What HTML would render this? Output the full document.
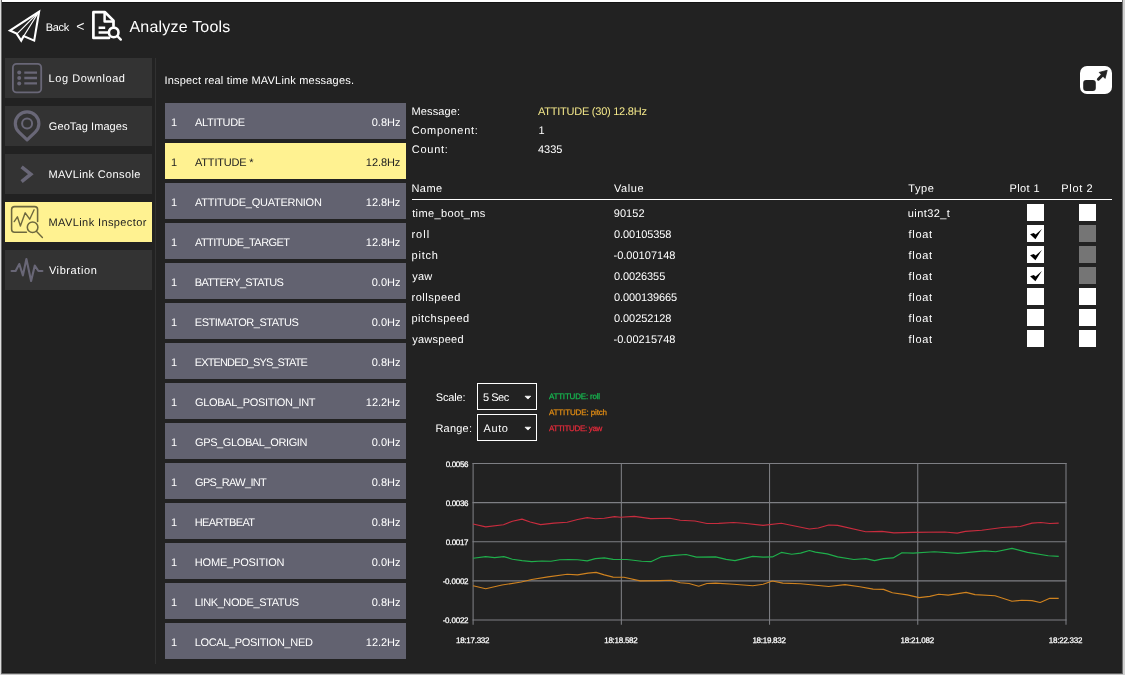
<!DOCTYPE html>
<html lang="en"><head><meta charset="utf-8"><title>Analyze Tools - MAVLink Inspector</title>
<style>
html,body{margin:0;padding:0;}
body{width:1125px;height:675px;overflow:hidden;background:#222;position:relative;font-family:"Liberation Sans",sans-serif;color:#fff;}
.frame{position:absolute;left:0;top:0;width:1125px;height:675px;box-sizing:border-box;pointer-events:none;}
.b{position:absolute;}
.t{position:absolute;white-space:pre;line-height:normal;text-rendering:geometricPrecision;}
.sb{position:absolute;left:5px;width:147px;height:40px;background:#333;}
.sb.sel{background:#fff291;}
.li{position:absolute;left:165px;width:241px;height:36px;background:#626270;}
.li.sel{background:#fff291;}
.cb{position:absolute;width:17px;height:17px;background:#fff;}
.cb.dis{background:#757575;}
.combo{position:absolute;left:477px;width:60px;height:27px;box-sizing:border-box;border:1px solid #fff;}
svg.ov{position:absolute;left:0;top:0;}
.tl{position:absolute;left:0;top:0;width:1125px;height:675px;will-change:transform;}

</style></head>
<body>
<div class="b" style="left:0;top:0;width:1125px;height:2px;background:#fff"></div>
<div class="b" style="left:0;top:2px;width:1125px;height:1px;background:#141414"></div>
<div class="b" style="left:0;top:672px;width:1125px;height:1px;background:#1c1c1c"></div>
<div class="b" style="left:0;top:673px;width:1125px;height:1px;background:#5e5e5e"></div>
<div class="b" style="left:0;top:674px;width:1125px;height:1px;background:#c6c6c6"></div>
<div class="b" style="left:0;top:0;width:1px;height:675px;background:#dedede"></div>
<div class="b" style="left:1px;top:0;width:1px;height:674px;background:#6a6a6a"></div>
<div class="b" style="left:2px;top:3px;width:1px;height:670px;background:#1d1d1d"></div>
<div class="b" style="left:1121px;top:3px;width:1px;height:670px;background:#272727"></div>
<div class="b" style="left:1122px;top:0;width:1px;height:674px;background:#6e6e6e"></div>
<div class="b" style="left:1123px;top:0;width:2px;height:675px;background:#d0d0d0"></div>
<div class="sb" style="top:58px"></div>
<div class="sb" style="top:106px"></div>
<div class="sb" style="top:154px"></div>
<div class="sb sel" style="top:202px"></div>
<div class="sb" style="top:250px"></div>
<div class="b" style="left:155px;top:58px;width:1px;height:606px;background:#313131"></div>
<div class="li" style="top:103px"></div>
<div class="li sel" style="top:143px"></div>
<div class="li" style="top:183px"></div>
<div class="li" style="top:223px"></div>
<div class="li" style="top:263px"></div>
<div class="li" style="top:303px"></div>
<div class="li" style="top:343px"></div>
<div class="li" style="top:383px"></div>
<div class="li" style="top:423px"></div>
<div class="li" style="top:463px"></div>
<div class="li" style="top:503px"></div>
<div class="li" style="top:543px"></div>
<div class="li" style="top:583px"></div>
<div class="li" style="top:623px"></div>
<div class="b" style="left:412px;top:199px;width:700px;height:1px;background:#fff"></div>
<div class="cb" style="left:1027px;top:204px"></div>
<div class="cb" style="left:1079px;top:204px"></div>
<div class="cb" style="left:1027px;top:225px"></div>
<div class="cb dis" style="left:1079px;top:225px"></div>
<div class="cb" style="left:1027px;top:246px"></div>
<div class="cb dis" style="left:1079px;top:246px"></div>
<div class="cb" style="left:1027px;top:267px"></div>
<div class="cb dis" style="left:1079px;top:267px"></div>
<div class="cb" style="left:1027px;top:288px"></div>
<div class="cb" style="left:1079px;top:288px"></div>
<div class="cb" style="left:1027px;top:309px"></div>
<div class="cb" style="left:1079px;top:309px"></div>
<div class="cb" style="left:1027px;top:330px"></div>
<div class="cb" style="left:1079px;top:330px"></div>
<div class="combo" style="top:383px"></div>
<div class="combo" style="top:414px"></div>
<div class="b" style="left:1080px;top:66px;width:32px;height:28px;border-radius:7px;background:#fff"></div>
<svg class="ov" width="1125" height="675" viewBox="0 0 1125 675" fill="none">
<g stroke="#fff" stroke-linejoin="miter" stroke-linecap="round">
<path d="M39.1,11.6 L9.9,30.5 L16.6,33.6 L21.2,40.6 L23.7,36 L34.2,40.6 Z" stroke-width="2.1"/>
<path d="M38.9,11.8 L17.2,33.6 M38.9,11.8 L23.8,36" stroke-width="1.2"/>
</g>
<g stroke="#fff" stroke-width="2.7" stroke-linejoin="round" stroke-linecap="round">
<path d="M109,37.9 L93.4,37.9 L93.4,12.2 L105,12.2 L113.5,20.6 L113.5,26"/>
<path d="M104.6,12.6 L104.6,21.4 L113,21.4" stroke-width="2.5"/>
<path d="M98.6,27.7 L105.2,27.7 M98.6,32.6 L108,32.6" stroke-width="2.5" stroke-linecap="butt"/>
<circle cx="113.7" cy="32.4" r="4.8" stroke-width="2.6" fill="#222"/>
<path d="M117.4,36.2 L120.8,39.6" stroke-width="2.4"/>
</g>
<g stroke="#696777" fill="none">
<rect x="12.9" y="63.8" width="28.3" height="28.5" rx="3.6" stroke-width="1.8"/>
<path d="M24.3,72.6 H37 M24.3,78 H37 M24.3,83.4 H37" stroke-width="2.3"/>
</g>
<g fill="#696777"><circle cx="19.2" cy="72.6" r="2"/><circle cx="19.2" cy="78" r="2"/><circle cx="19.2" cy="83.4" r="2"/></g>
<g stroke="#696777" fill="none">
<path d="M27.1,139.9 L35.24,132.14 A11.8,11.8 0 1 0 18.96,132.14 Z" stroke-width="3.2" stroke-linejoin="round"/>
<circle cx="27.1" cy="123.4" r="5" stroke-width="2"/>
</g>
<path d="M21.6,166.8 L30.8,174.2 L21.6,181.6" stroke="#696777" stroke-width="3.6" stroke-linejoin="miter" fill="none"/>
<g stroke="#6d683f" fill="none" stroke-width="1.55" stroke-linecap="round" stroke-linejoin="round">
<path d="M26.4,232.3 H14.6 A3,3 0 0 1 11.6,229.3 V209.6 A3,3 0 0 1 14.6,206.6 H34.6 A3,3 0 0 1 37.6,209.6 V221.5"/>
<path d="M14.2,221.6 L17.4,216.8 L20.4,226 L25.2,212.8 L29.7,219.2 L34.1,209.8" stroke-width="1.4"/>
<circle cx="32.6" cy="227.2" r="5.3"/>
<path d="M36.6,231.4 L42.4,237.4" stroke-width="1.4"/>
</g>
<path d="M11.6,271 H15.6 L19.3,264 L22.9,275.4 L26.4,259 L31.1,281 L34.8,265.6 L38.4,271 H42.4" stroke="#696777" stroke-width="2.1" stroke-linejoin="round" stroke-linecap="round" fill="none"/>
<rect x="1083.2" y="80" width="12.6" height="11" rx="3" fill="#222"/>
<path d="M1098.4,79.2 L1103.2,74.4" stroke="#222" stroke-width="3" stroke-linecap="round"/>
<path d="M1107.2,70.3 L1099.2,72.4 L1105.1,78.4 Z" fill="#222" stroke="#222" stroke-width="0.8" stroke-linejoin="round"/>
<path d="M1030.1,234.2 L1033.8,233.1 L1035.6,234.5 L1041.9,229.0 L1035.4,239.2 Z" fill="#000"/>
<path d="M1030.1,255.2 L1033.8,254.1 L1035.6,255.5 L1041.9,250.0 L1035.4,260.2 Z" fill="#000"/>
<path d="M1030.1,276.2 L1033.8,275.1 L1035.6,276.5 L1041.9,271.0 L1035.4,281.2 Z" fill="#000"/>
<path d="M525,396.2 H530.8 L527.9,399.1 Z" fill="#fff" stroke="#fff" stroke-width="0.7" stroke-linejoin="round"/>
<path d="M525,427.2 H530.8 L527.9,430.1 Z" fill="#fff" stroke="#fff" stroke-width="0.7" stroke-linejoin="round"/>
<g stroke="#7e7f84" stroke-width="1.05">
<path d="M472.5,463.5 H1066.6"/>
<path d="M472.5,502.6 H1066.6"/>
<path d="M472.5,541.7 H1066.6"/>
<path d="M472.5,580.85 H1066.6"/>
<path d="M472.5,620.0 H1066.6"/>
<path d="M473.1,463 V624.7"/>
<path d="M621.35,463 V624.7"/>
<path d="M769.55,463 V624.7"/>
<path d="M917.75,463 V624.7"/>
<path d="M1066.0,463 V624.7"/>
</g>
<polyline points="473.1,558.3 485.7,556.6 494.6,557.6 503.8,556.6 512.4,559.2 522.0,560.6 531.7,561.6 542.0,561.0 550.9,561.3 559.8,559.8 568.7,559.5 577.6,559.8 587.2,560.9 595.4,558.6 604.3,557.9 613.1,559.4 626.9,559.5 641.7,561.3 651.3,561.6 660.9,556.9 674.3,555.4 686.1,554.5 696.5,557.1 715.7,556.9 726.1,559.4 735.0,560.6 752.8,556.4 763.1,557.1 772.4,556.9 781.3,552.4 791.7,554.2 800.6,553.1 809.4,550.5 815.4,552.1 827.2,553.9 837.6,556.9 853.9,559.5 865.7,558.6 874.6,560.6 883.5,558.6 893.1,557.9 902.0,552.7 913.1,553.1 934.3,551.7 958.0,553.4 984.6,550.9 995.7,551.7 1012.0,548.4 1027.6,552.4 1048.3,555.7 1058.7,556.4" stroke="#1fae4b" stroke-width="1.15" stroke-linejoin="round" fill="none"/>
<polyline points="473.1,585.7 485.7,588.7 502.0,585.0 521.3,582.0 531.7,579.5 548.0,576.9 567.2,574.3 577.6,574.9 588.0,573.1 596.1,572.4 604.3,574.9 613.1,577.1 623.9,577.3 640.2,580.9 659.4,580.6 671.3,580.3 680.2,582.8 689.1,583.5 698.7,586.2 706.9,583.5 715.7,583.1 733.5,584.3 752.8,585.7 763.1,584.3 772.4,581.0 782.8,583.1 800.6,583.8 828.7,586.5 845.0,584.6 859.8,586.8 873.1,589.1 883.5,589.4 892.4,592.7 907.2,594.9 919.1,597.6 929.8,596.4 938.7,594.2 948.3,595.1 966.1,592.4 975.0,594.6 995.0,595.8 1012.0,601.3 1021.7,600.3 1032.0,600.6 1040.2,602.5 1049.8,598.3 1058.7,598.3" stroke="#cf821f" stroke-width="1.15" stroke-linejoin="round" fill="none"/>
<polyline points="473.1,524.0 485.7,526.9 503.5,524.7 512.4,521.3 522.0,519.1 530.2,522.0 540.6,524.6 553.9,523.1 567.2,522.3 577.6,519.5 587.2,517.6 595.4,518.8 604.3,518.3 614.6,516.6 620.6,517.3 634.3,516.4 650.6,518.6 669.8,518.3 680.2,520.3 695.0,521.0 706.9,523.5 718.7,523.4 733.5,522.5 743.9,523.2 763.1,525.4 781.3,523.2 809.4,529.0 818.3,528.0 828.7,525.0 837.6,525.4 865.7,531.7 882.0,531.4 893.9,532.9 913.1,532.4 944.6,532.0 957.2,533.1 965.4,531.4 981.7,530.2 1002.4,527.5 1020.2,526.5 1032.0,523.1 1040.9,522.5 1049.8,523.5 1058.7,523.1" stroke="#c82c3e" stroke-width="1.15" stroke-linejoin="round" fill="none"/>
</svg>
<div class="tl">
<span class="t" style="left:45.85px;top:22.00px;font-size:11px;letter-spacing:-0.350px;">Back</span>
<span class="t" style="left:76.30px;top:18.00px;font-size:14px;">&lt;</span>
<span class="t" style="left:129.40px;top:19.00px;font-size:16px;letter-spacing:0.208px;">Analyze Tools</span>
<span class="t" style="left:48.55px;top:73.00px;font-size:11px;letter-spacing:0.555px;">Log Download</span>
<span class="t" style="left:48.80px;top:121.00px;font-size:11px;letter-spacing:0.087px;">GeoTag Images</span>
<span class="t" style="left:48.55px;top:169.00px;font-size:11px;letter-spacing:0.371px;">MAVLink Console</span>
<span class="t" style="left:48.55px;top:217.00px;font-size:11px;letter-spacing:0.397px;color:#222;">MAVLink Inspector</span>
<span class="t" style="left:48.90px;top:265.00px;font-size:11px;letter-spacing:0.581px;">Vibration</span>
<span class="t" style="left:164.40px;top:75.00px;font-size:11px;letter-spacing:0.187px;">Inspect real time MAVLink messages.</span>
<span class="t" style="left:171.05px;top:117.00px;font-size:11px;">1</span>
<span class="t" style="left:195.00px;top:117.00px;font-size:11px;letter-spacing:-0.314px;">ALTITUDE</span>
<span class="t" style="left:371.75px;top:117.00px;font-size:11px;">0.8Hz</span>
<span class="t" style="left:171.05px;top:157.00px;font-size:11px;color:#222;">1</span>
<span class="t" style="left:195.00px;top:157.00px;font-size:11px;letter-spacing:-0.183px;color:#222;">ATTITUDE *</span>
<span class="t" style="left:365.85px;top:157.00px;font-size:11px;letter-spacing:-0.070px;color:#222;">12.8Hz</span>
<span class="t" style="left:171.05px;top:197.00px;font-size:11px;">1</span>
<span class="t" style="left:195.00px;top:197.00px;font-size:11px;letter-spacing:-0.264px;">ATTITUDE_QUATERNION</span>
<span class="t" style="left:365.85px;top:197.00px;font-size:11px;letter-spacing:-0.070px;">12.8Hz</span>
<span class="t" style="left:171.05px;top:237.00px;font-size:11px;">1</span>
<span class="t" style="left:195.00px;top:237.00px;font-size:11px;letter-spacing:-0.561px;">ATTITUDE_TARGET</span>
<span class="t" style="left:365.85px;top:237.00px;font-size:11px;letter-spacing:-0.070px;">12.8Hz</span>
<span class="t" style="left:171.05px;top:277.00px;font-size:11px;">1</span>
<span class="t" style="left:194.75px;top:277.00px;font-size:11px;letter-spacing:-0.654px;">BATTERY_STATUS</span>
<span class="t" style="left:371.75px;top:277.00px;font-size:11px;">0.0Hz</span>
<span class="t" style="left:171.05px;top:317.00px;font-size:11px;">1</span>
<span class="t" style="left:194.75px;top:317.00px;font-size:11px;letter-spacing:-0.460px;">ESTIMATOR_STATUS</span>
<span class="t" style="left:371.75px;top:317.00px;font-size:11px;">0.0Hz</span>
<span class="t" style="left:171.05px;top:357.00px;font-size:11px;">1</span>
<span class="t" style="left:194.75px;top:357.00px;font-size:11px;letter-spacing:-0.868px;">EXTENDED_SYS_STATE</span>
<span class="t" style="left:371.75px;top:357.00px;font-size:11px;">0.8Hz</span>
<span class="t" style="left:171.05px;top:397.00px;font-size:11px;">1</span>
<span class="t" style="left:195.00px;top:397.00px;font-size:11px;letter-spacing:-0.333px;">GLOBAL_POSITION_INT</span>
<span class="t" style="left:365.85px;top:397.00px;font-size:11px;letter-spacing:-0.070px;">12.2Hz</span>
<span class="t" style="left:171.05px;top:437.00px;font-size:11px;">1</span>
<span class="t" style="left:195.00px;top:437.00px;font-size:11px;letter-spacing:-0.384px;">GPS_GLOBAL_ORIGIN</span>
<span class="t" style="left:371.75px;top:437.00px;font-size:11px;">0.0Hz</span>
<span class="t" style="left:171.05px;top:477.00px;font-size:11px;">1</span>
<span class="t" style="left:195.00px;top:477.00px;font-size:11px;letter-spacing:-0.665px;">GPS_RAW_INT</span>
<span class="t" style="left:371.75px;top:477.00px;font-size:11px;">0.8Hz</span>
<span class="t" style="left:171.05px;top:517.00px;font-size:11px;">1</span>
<span class="t" style="left:194.75px;top:517.00px;font-size:11px;letter-spacing:-0.588px;">HEARTBEAT</span>
<span class="t" style="left:371.75px;top:517.00px;font-size:11px;">0.8Hz</span>
<span class="t" style="left:171.05px;top:557.00px;font-size:11px;">1</span>
<span class="t" style="left:194.75px;top:557.00px;font-size:11px;letter-spacing:-0.163px;">HOME_POSITION</span>
<span class="t" style="left:371.75px;top:557.00px;font-size:11px;">0.0Hz</span>
<span class="t" style="left:171.05px;top:597.00px;font-size:11px;">1</span>
<span class="t" style="left:194.75px;top:597.00px;font-size:11px;letter-spacing:-0.393px;">LINK_NODE_STATUS</span>
<span class="t" style="left:371.75px;top:597.00px;font-size:11px;">0.8Hz</span>
<span class="t" style="left:171.05px;top:637.00px;font-size:11px;">1</span>
<span class="t" style="left:194.75px;top:637.00px;font-size:11px;letter-spacing:-0.353px;">LOCAL_POSITION_NED</span>
<span class="t" style="left:365.85px;top:637.00px;font-size:11px;letter-spacing:-0.070px;">12.2Hz</span>
<span class="t" style="left:411.45px;top:106.00px;font-size:11px;letter-spacing:0.143px;">Message:</span>
<span class="t" style="left:411.70px;top:125.00px;font-size:11px;letter-spacing:0.678px;">Component:</span>
<span class="t" style="left:411.70px;top:144.00px;font-size:11px;letter-spacing:0.760px;">Count:</span>
<span class="t" style="left:538.00px;top:106.00px;font-size:11px;letter-spacing:-0.242px;color:#f3e78a;">ATTITUDE (30) 12.8Hz</span>
<span class="t" style="left:538.45px;top:125.00px;font-size:11px;">1</span>
<span class="t" style="left:537.95px;top:144.00px;font-size:11px;">4335</span>
<span class="t" style="left:411.45px;top:183.00px;font-size:11px;letter-spacing:0.483px;">Name</span>
<span class="t" style="left:614.00px;top:183.00px;font-size:11px;letter-spacing:0.550px;">Value</span>
<span class="t" style="left:908.25px;top:183.00px;font-size:11px;letter-spacing:0.550px;">Type</span>
<span class="t" style="left:1009.45px;top:183.00px;font-size:11px;letter-spacing:0.400px;">Plot 1</span>
<span class="t" style="left:1061.35px;top:183.00px;font-size:11px;letter-spacing:0.640px;">Plot 2</span>
<span class="t" style="left:412.20px;top:208.00px;font-size:11px;letter-spacing:0.368px;">time_boot_ms</span>
<span class="t" style="left:613.80px;top:208.00px;font-size:11px;letter-spacing:0.037px;">90152</span>
<span class="t" style="left:907.75px;top:208.00px;font-size:11px;letter-spacing:0.429px;">uint32_t</span>
<span class="t" style="left:411.45px;top:229.00px;font-size:11px;letter-spacing:1.017px;">roll</span>
<span class="t" style="left:614.05px;top:229.00px;font-size:11px;letter-spacing:-0.078px;">0.00105358</span>
<span class="t" style="left:908.50px;top:229.00px;font-size:11px;letter-spacing:0.713px;">float</span>
<span class="t" style="left:411.45px;top:250.00px;font-size:11px;letter-spacing:0.825px;">pitch</span>
<span class="t" style="left:613.50px;top:250.00px;font-size:11px;letter-spacing:0.010px;">-0.00107148</span>
<span class="t" style="left:908.50px;top:250.00px;font-size:11px;letter-spacing:0.713px;">float</span>
<span class="t" style="left:412.20px;top:271.00px;font-size:11px;letter-spacing:0.275px;">yaw</span>
<span class="t" style="left:614.05px;top:271.00px;font-size:11px;letter-spacing:-0.100px;">0.0026355</span>
<span class="t" style="left:908.50px;top:271.00px;font-size:11px;letter-spacing:0.713px;">float</span>
<span class="t" style="left:411.45px;top:292.00px;font-size:11px;letter-spacing:0.531px;">rollspeed</span>
<span class="t" style="left:614.05px;top:292.00px;font-size:11px;letter-spacing:-0.105px;">0.000139665</span>
<span class="t" style="left:908.50px;top:292.00px;font-size:11px;letter-spacing:0.713px;">float</span>
<span class="t" style="left:411.45px;top:313.00px;font-size:11px;letter-spacing:0.506px;">pitchspeed</span>
<span class="t" style="left:614.05px;top:313.00px;font-size:11px;letter-spacing:-0.078px;">0.00252128</span>
<span class="t" style="left:908.50px;top:313.00px;font-size:11px;letter-spacing:0.713px;">float</span>
<span class="t" style="left:412.20px;top:334.00px;font-size:11px;letter-spacing:0.271px;">yawspeed</span>
<span class="t" style="left:613.50px;top:334.00px;font-size:11px;letter-spacing:0.010px;">-0.00215748</span>
<span class="t" style="left:908.50px;top:334.00px;font-size:11px;letter-spacing:0.713px;">float</span>
<span class="t" style="left:435.70px;top:392.00px;font-size:11px;letter-spacing:-0.130px;">Scale:</span>
<span class="t" style="left:435.45px;top:423.00px;font-size:11px;letter-spacing:0.210px;">Range:</span>
<span class="t" style="left:483.00px;top:392.00px;font-size:11px;letter-spacing:-0.475px;">5 Sec</span>
<span class="t" style="left:483.50px;top:423.00px;font-size:11px;letter-spacing:0.617px;">Auto</span>
<span class="t" style="left:548.90px;top:392.00px;font-size:8px;letter-spacing:-0.188px;color:#16b850;-webkit-text-stroke:0.25px #16b850;">ATTITUDE: roll</span>
<span class="t" style="left:548.90px;top:408.00px;font-size:8px;letter-spacing:-0.121px;color:#e08c14;-webkit-text-stroke:0.25px #e08c14;">ATTITUDE: pitch</span>
<span class="t" style="left:548.90px;top:424.00px;font-size:8px;letter-spacing:-0.312px;color:#e22b3b;-webkit-text-stroke:0.25px #e22b3b;">ATTITUDE: yaw</span>
<span class="t" style="left:445.75px;top:460.00px;font-size:8px;letter-spacing:-0.360px;-webkit-text-stroke:0.25px #fff;">0.0056</span>
<span class="t" style="left:445.75px;top:499.00px;font-size:8px;letter-spacing:-0.360px;-webkit-text-stroke:0.25px #fff;">0.0036</span>
<span class="t" style="left:445.75px;top:538.00px;font-size:8px;letter-spacing:-0.360px;-webkit-text-stroke:0.25px #fff;">0.0017</span>
<span class="t" style="left:442.65px;top:577.00px;font-size:8px;letter-spacing:-0.200px;-webkit-text-stroke:0.25px #fff;">-0.0002</span>
<span class="t" style="left:442.65px;top:616.00px;font-size:8px;letter-spacing:-0.200px;-webkit-text-stroke:0.25px #fff;">-0.0022</span>
<span class="t" style="left:455.95px;top:636.00px;font-size:8px;letter-spacing:-0.256px;-webkit-text-stroke:0.25px #fff;">18:17.332</span>
<span class="t" style="left:604.20px;top:636.00px;font-size:8px;letter-spacing:-0.256px;-webkit-text-stroke:0.25px #fff;">18:18.582</span>
<span class="t" style="left:752.40px;top:636.00px;font-size:8px;letter-spacing:-0.256px;-webkit-text-stroke:0.25px #fff;">18:19.832</span>
<span class="t" style="left:900.60px;top:636.00px;font-size:8px;letter-spacing:-0.256px;-webkit-text-stroke:0.25px #fff;">18:21.082</span>
<span class="t" style="left:1048.85px;top:636.00px;font-size:8px;letter-spacing:-0.256px;-webkit-text-stroke:0.25px #fff;">18:22.332</span>
</div>
</body></html>
